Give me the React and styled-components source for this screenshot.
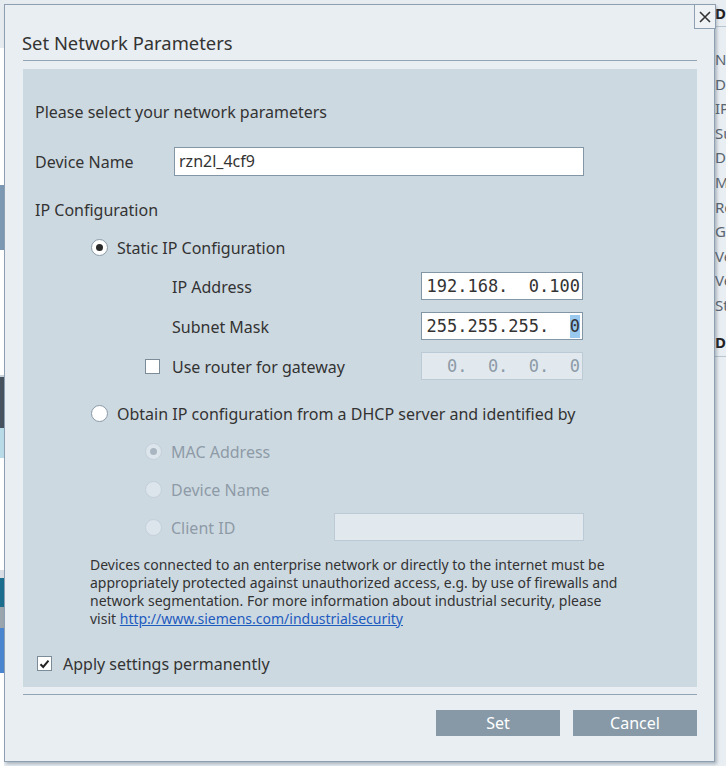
import React from 'react'
import styled, { createGlobalStyle } from 'styled-components'

const GlobalStyle = createGlobalStyle`
  html, body {
    margin: 0;
    padding: 0;
  }
  body {
    width: 726px;
    height: 766px;
    overflow: hidden;
    background: #e9eef2;
    font-family: 'Noto Sans', 'Open Sans', sans-serif;
    color: #333;
  }
`

/* ---------- background application window ---------- */

const Workspace = styled.div`
  position: relative;
  display: flex;
  width: 726px;
  height: 766px;
  background: #e6ecf0;
`

const SideStrip = styled.div`
  display: flex;
  flex-direction: column;
  width: 4px;
`

const StripBlock = styled.div`
  height: ${props => props.$h}px;
  background: ${props => props.$color};
`

const Filler = styled.div`
  flex: 1;
`

const PropsPanel = styled.div`
  width: 11px;
  overflow: hidden;
  background: #e9eef2;
  display: flex;
  flex-direction: column;
  font-size: 15px;
  white-space: nowrap;
`

const PropsHead = styled.div`
  height: ${props => props.$h}px;
  line-height: ${props => props.$h}px;
  margin-top: ${props => props.$mt || 0}px;
  font-weight: bold;
  color: #222;
  border-bottom: 1px solid #b9c6d0;
`

const PropsItem = styled.div`
  height: 24.6px;
  line-height: 24.6px;
  color: #5a6570;
`

const PropsList = styled.div`
  padding-top: 20px;
`

/* ---------- dialog ---------- */

const Dialog = styled.div`
  position: absolute;
  left: 4px;
  top: 4px;
  width: 711px;
  height: 758px;
  box-sizing: border-box;
  border: 1px solid #8d9fb0;
  background: #e9eef2;
  box-shadow: 2px 2px 3px rgba(60, 80, 100, 0.35);
  display: flex;
  flex-direction: column;
  padding: 0 17px 0 18px;
`

const CloseButton = styled.div`
  position: absolute;
  top: -1px;
  right: -2px;
  width: 22px;
  height: 25px;
  box-sizing: border-box;
  border: 1px solid #8d9fb0;
  background: #eef2f5;
  display: flex;
  align-items: center;
  justify-content: center;
`

const Header = styled.div`
  height: 56px;
  display: flex;
  align-items: flex-end;
  border-bottom: 1px solid #93a5b5;
  box-sizing: border-box;
`

const Title = styled.div`
  font-size: 18.4px;
  color: #333;
  margin: 0 0 5px -1px;
`

const Panel = styled.div`
  margin-top: 8px;
  height: 618px;
  background: #cdd9e1;
  display: flex;
  flex-direction: column;
  padding-left: 12px;
  box-sizing: border-box;
`

const Row = styled.div`
  display: flex;
  align-items: center;
  height: 28px;
  margin-top: ${props => props.$mt}px;
  padding-left: ${props => props.$indent || 0}px;
  font-size: 16px;
  color: ${props => props.$disabled ? '#8e9ba7' : '#333'};
`

const Label = styled.span`
  width: ${props => props.$w ? `${props.$w}px` : 'auto'};
  padding-top: 2px;
  flex-shrink: 0;
`

const TextBox = styled.div`
  width: ${props => props.$w}px;
  height: ${props => props.$h || 28}px;
  box-sizing: border-box;
  border: 1px solid ${props => props.$disabled ? '#bccad5' : '#8296a5'};
  background: ${props => props.$disabled ? '#e1e9ef' : '#fff'};
  display: flex;
  align-items: center;
  padding: 0 4px;
  font-size: 16px;
  color: #333;
`

const IpBox = styled(TextBox)`
  justify-content: flex-end;
  padding: 0 2px 0 0;
  font-family: 'DejaVu Sans Mono', 'Liberation Mono', monospace;
  font-size: 17px;
  white-space: pre;
  color: ${props => props.$disabled ? '#8e9ba7' : '#333'};
`

const Selected = styled.span`
  background: #99c9ef;
  line-height: 23px;
`

const RadioCircle = styled.span`
  width: 17px;
  height: 17px;
  box-sizing: border-box;
  border-radius: 50%;
  border: 1px solid ${props => props.$disabled ? '#c3cfd9' : '#8a9aa8'};
  background: ${props => props.$disabled ? '#dce5eb' : '#fff'};
  display: flex;
  align-items: center;
  justify-content: center;
  margin-right: 9px;
  margin-top: 1px;
  flex-shrink: 0;
`

const RadioDot = styled.span`
  width: 7px;
  height: 7px;
  border-radius: 50%;
  background: ${props => props.$disabled ? '#a9b6c1' : '#2b2b2b'};
`

const CheckSquare = styled.span`
  width: 15px;
  height: 15px;
  box-sizing: border-box;
  border: 1px solid #7b8b98;
  background: #fff;
  display: flex;
  align-items: center;
  justify-content: center;
  margin-right: ${props => props.$gap}px;
  margin-top: 1px;
  flex-shrink: 0;
`

const Notice = styled.div`
  margin-top: 15px;
  padding-left: 55px;
  width: 540px;
  font-size: 14px;
  line-height: 18px;
  color: #333;
`

const Link = styled.a`
  color: #1d5bbf;
  text-decoration: underline;
`

const Separator = styled.div`
  margin-top: 7px;
  height: 1px;
  background: #93a5b5;
`

const Footer = styled.div`
  display: flex;
  justify-content: flex-end;
  gap: 13px;
  margin-top: 15px;
`

const Button = styled.div`
  width: 124px;
  height: 26px;
  background: #8799a7;
  color: #fff;
  font-size: 16px;
  display: flex;
  align-items: center;
  justify-content: center;
`

const Radio = ({ checked, disabled }) => (
  <RadioCircle $disabled={disabled}>
    {checked && <RadioDot $disabled={disabled} />}
  </RadioCircle>
)

const Checkbox = ({ checked, gap }) => (
  <CheckSquare $gap={gap}>
    {checked && (
      <svg width="11" height="10" viewBox="0 0 11 10">
        <path d="M1.5 5.2 L4.2 8 L9.5 1.6" fill="none" stroke="#222" strokeWidth="2" />
      </svg>
    )}
  </CheckSquare>
)

const leftBlocks = [
  [48, '#e6ebef'], [137, '#ffffff'], [65, '#7c98b3'], [125, '#ffffff'],
  [2, '#c9d3db'], [51, '#46535f'], [30, '#b9dbe8'], [112, '#ffffff'],
  [8, '#d8dee3'], [29, '#1b6e8e'], [21, '#9aa5ae'], [45, '#4a86d0'],
  [93, '#ffffff'],
]

const propsItems = ['Na', 'De', 'IP', 'Su', 'De', 'Ma', 'Ro', 'Ga', 'Ve', 'Ve', 'St']

const App = () => (
  <>
    <GlobalStyle />
    <Workspace>
      <SideStrip>
        {leftBlocks.map(([h, c], i) => <StripBlock key={i} $h={h} $color={c} />)}
      </SideStrip>
      <Filler />
      <PropsPanel>
        <PropsHead $h={26}>De</PropsHead>
        <PropsList>
          {propsItems.map((t, i) => <PropsItem key={i}>{t}</PropsItem>)}
        </PropsList>
        <PropsHead $h={28} $mt={10}>DI</PropsHead>
      </PropsPanel>

      <Dialog>
        <CloseButton>
          <svg width="14" height="14" viewBox="0 0 14 14">
            <path d="M2 2 L12 12 M12 2 L2 12" stroke="#333" strokeWidth="1.6" />
          </svg>
        </CloseButton>
        <Header>
          <Title>Set Network Parameters</Title>
        </Header>
        <Panel>
          <Row $mt={28}><Label>Please select your network parameters</Label></Row>
          <Row $mt={22}>
            <Label $w={139}>Device Name</Label>
            <TextBox $w={410} $h={29}>rzn2l_4cf9</TextBox>
          </Row>
          <Row $mt={20}><Label>IP Configuration</Label></Row>
          <Row $mt={10} $indent={56}>
            <Radio checked />
            <Label>Static IP Configuration</Label>
          </Row>
          <Row $mt={11} $indent={137}>
            <Label $w={249}>IP Address</Label>
            <IpBox $w={162}>192.168.  0.100</IpBox>
          </Row>
          <Row $mt={12} $indent={137}>
            <Label $w={249}>Subnet Mask</Label>
            <IpBox $w={162}>255.255.255.  <Selected>0</Selected></IpBox>
          </Row>
          <Row $mt={12} $indent={110}>
            <Checkbox gap={12} />
            <Label $w={249}>Use router for gateway</Label>
            <IpBox $w={162} $disabled>  0.  0.  0.  0</IpBox>
          </Row>
          <Row $mt={19} $indent={56}>
            <Radio />
            <Label>Obtain IP configuration from a DHCP server and identified by</Label>
          </Row>
          <Row $mt={10} $indent={110} $disabled>
            <Radio checked disabled />
            <Label>MAC Address</Label>
          </Row>
          <Row $mt={10} $indent={110} $disabled>
            <Radio disabled />
            <Label>Device Name</Label>
          </Row>
          <Row $mt={10} $indent={110} $disabled>
            <Radio disabled />
            <Label $w={163}>Client ID</Label>
            <TextBox $w={250} $disabled />
          </Row>
          <Notice>
            Devices connected to an enterprise network or directly to the internet must be
            appropriately protected against unauthorized access, e.g. by use of firewalls and
            network segmentation. For more information about industrial security, please
            visit <Link>http://www.siemens.com/industrialsecurity</Link>
          </Notice>
          <Row $mt={21} $indent={2}>
            <Checkbox checked gap={11} />
            <Label>Apply settings permanently</Label>
          </Row>
        </Panel>
        <Separator />
        <Footer>
          <Button>Set</Button>
          <Button>Cancel</Button>
        </Footer>
      </Dialog>
    </Workspace>
  </>
)

export default App
